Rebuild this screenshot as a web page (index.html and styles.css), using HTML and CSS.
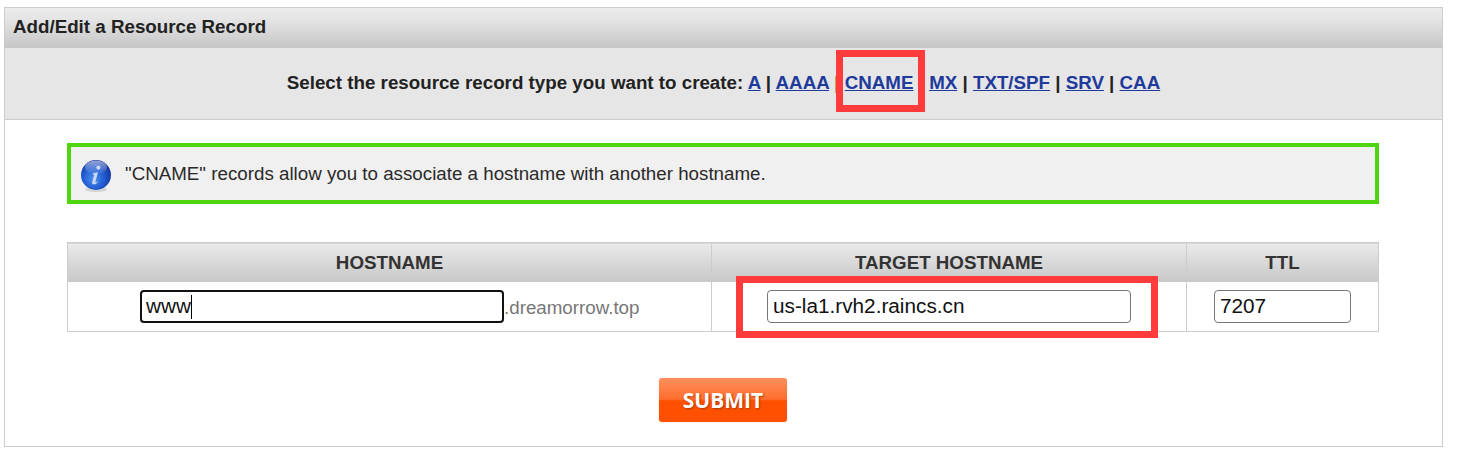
FILE: index.html
```html
<!DOCTYPE html>
<html lang="en">
<head>
<meta charset="utf-8">
<title>Add/Edit a Resource Record</title>
<link rel="stylesheet" href="styles.css">
</head>
<body>
<section class="panel">
  <h2 class="panel-title">Add/Edit a Resource Record</h2>
  <div class="type-bar">
    <p class="type-text">Select the resource record type you want to create: <a href="#">A</a> | <a href="#">AAAA</a> | <a href="#" class="current">CNAME</a> | <a href="#">MX</a> | <a href="#">TXT/SPF</a> | <a href="#">SRV</a> | <a href="#">CAA</a></p>
    <span class="mark mark-type"></span>
  </div>
  <div class="panel-body">
    <div class="notice">
      <svg class="info-icon" width="32" height="34" viewBox="0 0 32 34" aria-hidden="true">
        <defs>
          <radialGradient id="orb" cx="42%" cy="62%" r="62%">
            <stop offset="0" stop-color="#4d93ee"/>
            <stop offset="0.6" stop-color="#1f58cf"/>
            <stop offset="1" stop-color="#16329c"/>
          </radialGradient>
          <linearGradient id="gloss" x1="0" y1="0" x2="0" y2="1">
            <stop offset="0" stop-color="#fff" stop-opacity="0.55"/>
            <stop offset="1" stop-color="#fff" stop-opacity="0"/>
          </linearGradient>
        </defs>
        <ellipse cx="16" cy="30.5" rx="11" ry="2.5" fill="#d4d4d4"/>
        <circle cx="16" cy="16" r="15" fill="url(#orb)"/>
        <ellipse cx="16" cy="8.5" rx="11" ry="7" fill="url(#gloss)"/>
        <circle cx="18.4" cy="8.6" r="2.1" fill="#c9d8f6"/>
        <path d="M13 14.2l5-1-2.6 9.6c-.2.8.5 1 1.1.5l1.2-1.1.4.5c-1.3 1.7-2.6 2.6-4.2 2.6-1.5 0-2-1-1.6-2.4l1.9-7.2-1.3-.1z" fill="#c9d8f6"/>
      </svg>
      <span>"CNAME" records allow you to associate a hostname with another hostname.</span>
    </div>
    <table class="records">
      <colgroup>
        <col class="col-host"><col class="col-target"><col class="col-ttl">
      </colgroup>
      <thead>
        <tr><th>HOSTNAME</th><th>TARGET HOSTNAME</th><th>TTL</th></tr>
      </thead>
      <tbody>
        <tr>
          <td>
            <div class="host-field">
              <span class="caret-wrap">
                <input class="field field-host" type="text" value="www" aria-label="Hostname">
                <span class="caret"></span>
              </span><span class="domain">.dreamorrow.top</span>
            </div>
          </td>
          <td class="target-cell">
            <input class="field field-target" type="text" value="us-la1.rvh2.raincs.cn" aria-label="Target hostname">
            <span class="mark mark-target"></span>
          </td>
          <td><input class="field field-ttl" type="text" value="7207" aria-label="TTL"></td>
        </tr>
      </tbody>
    </table>
    <div class="actions">
      <button class="submit" type="button">SUBMIT</button>
    </div>
  </div>
</section>
</body>
</html>
```
FILE: styles.css
```css
* { box-sizing: border-box; }

html, body { margin: 0; background: #fff; }

body {
  padding: 7px 15px 0 4px;
  font-family: "Liberation Sans", Arial, sans-serif;
  color: #222;
}

.panel {
  border: 1px solid #ccc;
  height: 440px;
}

.panel-title {
  margin: 0;
  height: 40px;
  padding-left: 8px;
  font-size: 18.75px;
  line-height: 38px;
  font-weight: 700;
  color: #222;
  background: linear-gradient(#ececec, #e4e4e4 30%, #c6c6c6);
}

.type-bar {
  position: relative;
  height: 72px;
  background: #e6e6e6;
  border-bottom: 1px solid #ccc;
}

.type-text {
  margin: 0;
  padding-top: 24px;
  text-align: center;
  font-size: 18.75px;
  line-height: 22px;
  font-weight: 700;
  color: #222;
}

.type-text a { color: #203a9c; }

.mark {
  position: absolute;
  border: 7px solid #ff3b3b;
  pointer-events: none;
}

.mark-type {
  left: 831px;
  top: 2px;
  width: 89px;
  height: 62px;
}

.panel-body { padding: 23px 63px 0 62px; }

.notice {
  display: flex;
  align-items: center;
  gap: 13px;
  height: 61px;
  padding: 0 0 0 9px;
  background: #f0f0f0;
  border: 4px solid #4fd60f;
  font-size: 18.75px;
  color: #2a2a2a;
}

.info-icon { flex: none; margin-top: 4px; }

.records {
  width: 1311px;
  margin-top: 38px;
  border-collapse: collapse;
  table-layout: fixed;
}

.col-host { width: 644px; }
.col-target { width: 475px; }
.col-ttl { width: 192px; }

.records th, .records td {
  border: 1px solid #ccc;
  padding: 0;
  text-align: center;
}

.records th {
  height: 39px;
  padding-top: 1px;
  font-size: 18.75px;
  font-weight: 700;
  color: #333;
  background: linear-gradient(#eaeaea, #dcdcdc 40%, #c8c8c8);
}

.records td { height: 50px; }

.host-field {
  display: flex;
  align-items: center;
  padding-left: 72px;
}

.caret-wrap { position: relative; display: block; flex: none; }

.field {
  display: block;
  height: 33px;
  padding: 0 5px 2px;
  border: 1px solid #767676;
  border-radius: 4px;
  background: #fff;
  font: 20.75px "Liberation Sans", Arial, sans-serif;
  color: #111;
  outline: none;
}

.field-host {
  width: 364px;
  border: 2px solid #111;
  padding: 0 4px 2px;
}

.caret {
  position: absolute;
  left: 51px;
  top: 5px;
  width: 1px;
  height: 24px;
  background: #000;
}

.domain {
  font-size: 18.75px;
  color: #777;
  margin-top: 2px;
}

.target-cell { position: relative; }

.field-target { width: 364px; margin-left: 55px; }

.mark-target {
  left: 24px;
  top: -6px;
  width: 422px;
  height: 62px;
}

.field-ttl { width: 137px; margin-left: 27px; }

.actions {
  display: flex;
  justify-content: center;
  margin-top: 46px;
}

.submit {
  width: 128px;
  height: 44px;
  padding: 0;
  border: 0;
  border-radius: 3px;
  background: linear-gradient(#ff8f5c 0, #ff6f30 48%, #fe5000 52%, #fe5000 100%);
  box-shadow: 0 0 1px #e8a080;
  font: 700 21px "Open Sans", sans-serif;
  color: #fff;
  text-shadow: 1px 1px 2px #a83a00;
}
```
